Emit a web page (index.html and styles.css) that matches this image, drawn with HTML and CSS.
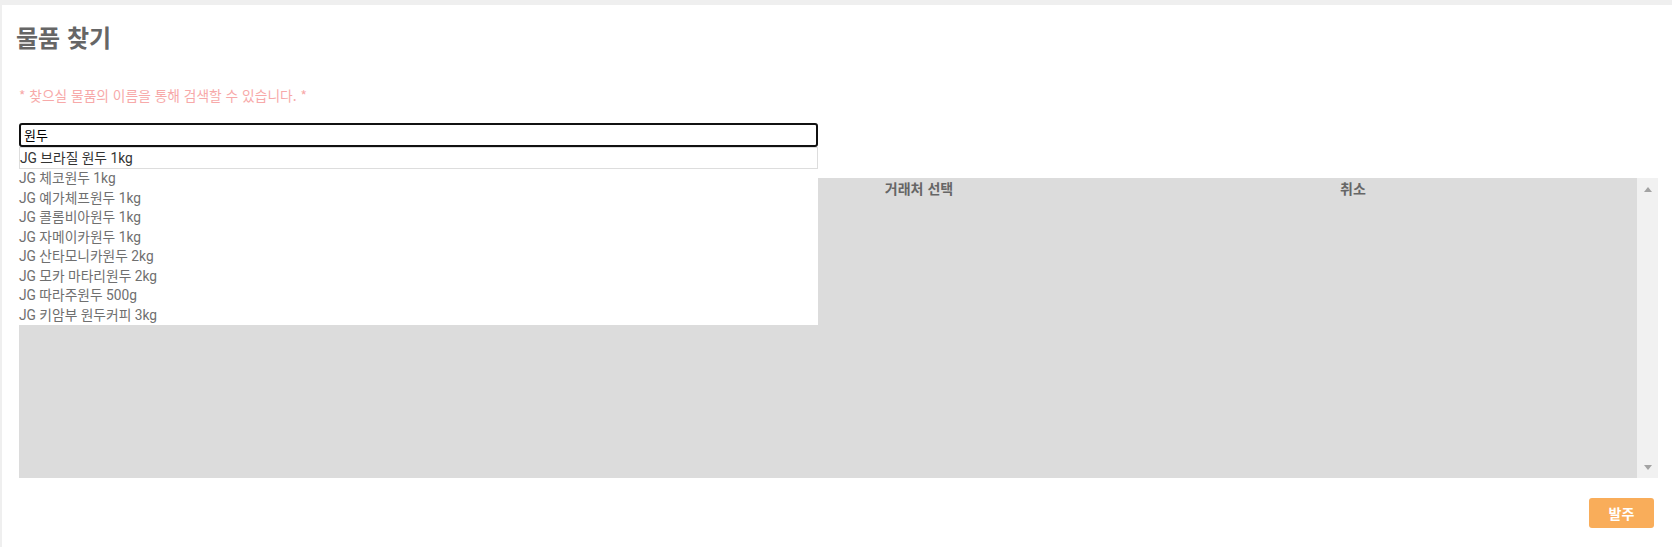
FILE: index.html
```html
<!DOCTYPE html>
<html lang="ko">
<head>
<meta charset="utf-8">
<title>물품 찾기</title>
<link rel="stylesheet" href="styles.css">
</head>
<body>
<div class="page">
  <h1 class="title">물품 찾기</h1>
  <p class="hint">* 찾으실 물품의 이름을 통해 검색할 수 있습니다. *</p>
  <div class="search">
    <div class="search-input">원두</div>
    <ul class="suggest">
      <li class="item active">JG 브라질 원두 1kg</li>
      <li class="item">JG 체코원두 1kg</li>
      <li class="item">JG 예가체프원두 1kg</li>
      <li class="item">JG 콜롬비아원두 1kg</li>
      <li class="item">JG 자메이카원두 1kg</li>
      <li class="item">JG 산타모니카원두 2kg</li>
      <li class="item">JG 모카 마타리원두 2kg</li>
      <li class="item">JG 따라주원두 500g</li>
      <li class="item">JG 키암부 원두커피 3kg</li>
    </ul>
  </div>
  <div class="table">
    <div class="grid">
      <div class="head">
        <div class="th"></div>
        <div class="th">거래처 선택</div>
        <div class="th"></div>
        <div class="th">취소</div>
      </div>
    </div>
    <div class="scrollbar">
      <span class="arrow up"></span>
      <span class="arrow down"></span>
    </div>
  </div>
  <div class="actions">
    <button class="btn-order">발주</button>
  </div>
</div>
</body>
</html>
```

FILE: styles.css
```css
html, body {
  margin: 0;
  padding: 0;
}
body {
  background: #efefef;
  font-family: Roboto, "Noto Sans CJK KR", sans-serif;
  height: 547px;
  overflow: hidden;
}
.page {
  margin: 5px 0 0 2px;
  height: 542px;
  background: #ffffff;
  padding: 0 14px 0 17px;
  box-sizing: border-box;
  display: flex;
  flex-direction: column;
}
.title {
  margin: 17px 0 0 -3px;
  font-family: "Noto Sans CJK KR", sans-serif;
  font-size: 24px;
  line-height: 30px;
  font-weight: 700;
  color: #666666;
}
.hint {
  margin: 34px 0 0 0;
  font-family: "Noto Sans CJK KR", sans-serif;
  font-size: 13.75px;
  line-height: 18px;
  color: #f7a9a9;
}
.search {
  position: relative;
  margin-top: 19px;
  width: 799px;
  z-index: 2;
}
.search-input {
  height: 24px;
  box-sizing: border-box;
  border: 2px solid #111111;
  border-radius: 3px;
  padding: 0 3px;
  font-family: "Noto Sans CJK KR", sans-serif;
  font-size: 13px;
  line-height: 20px;
  color: #000000;
}
.suggest {
  position: absolute;
  top: 100%;
  left: 0;
  width: 799px;
  margin: 0;
  padding: 0;
  list-style: none;
  background: #ffffff;
}
.item {
  height: 19.5px;
  line-height: 19.5px;
  font-size: 13.75px;
  color: #6f6f6f;
  white-space: nowrap;
}
.item.active {
  height: 22px;
  line-height: 20px;
  box-sizing: border-box;
  border: 1px solid #dddddd;
  color: #333333;
}
.table {
  margin-top: 31px;
  height: 300px;
  display: flex;
}
.grid {
  flex: 1;
  background: #dcdcdc;
}
.head {
  display: grid;
  grid-template-columns: 800px 200px 50px 1fr;
  height: 20px;
}
.th {
  text-align: center;
  font-family: "Noto Sans CJK KR", sans-serif;
  font-size: 14px;
  line-height: 20px;
  font-weight: 700;
  color: #666666;
}
.scrollbar {
  width: 21px;
  background: #f1f1f1;
  display: flex;
  flex-direction: column;
  justify-content: space-between;
  align-items: center;
  padding: 9px 0 8px;
  box-sizing: border-box;
}
.arrow {
  width: 0;
  height: 0;
  border-left: 4.5px solid transparent;
  border-right: 4.5px solid transparent;
}
.arrow.up {
  border-bottom: 5px solid #a3a3a3;
}
.arrow.down {
  border-top: 5px solid #a3a3a3;
}
.actions {
  display: flex;
  justify-content: flex-end;
  margin-top: 20px;
  padding-right: 4px;
}
.btn-order {
  width: 65px;
  height: 30px;
  border: none;
  border-radius: 3px;
  background: #f9ad5a;
  color: #ffffff;
  font-family: "Noto Sans CJK KR", sans-serif;
  font-size: 14px;
  font-weight: 700;
  padding: 0;
  cursor: pointer;
}
```
